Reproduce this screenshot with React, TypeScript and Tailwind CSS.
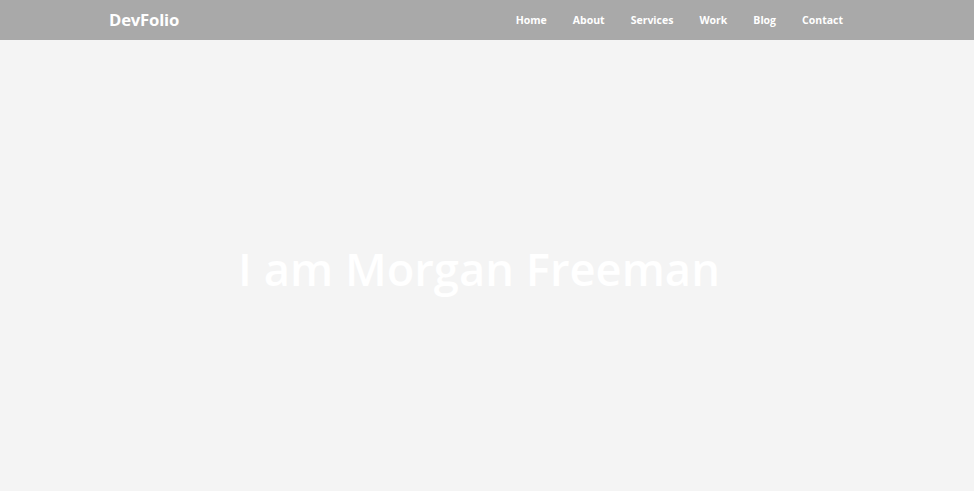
export default function App() {
  const links = ["Home", "About", "Services", "Work", "Blog", "Contact"]
  return (
    <div className="min-h-screen flex flex-col bg-[#f4f4f4]" style={{ fontFamily: '"Open Sans", "Noto Sans", sans-serif' }}>
      <header className="h-[40px] bg-[#a9a9a9] flex items-center justify-between pl-[109px] pr-[131px]">
        <div className="text-white text-[16.7px] font-bold tracking-[-0.2px]">DevFolio</div>
        <nav className="flex items-center gap-[26px] pt-[2px]">
          {links.map((l) => (
            <a key={l} href="#" className="text-white text-[10.5px] font-bold">{l}</a>
          ))}
        </nav>
      </header>
      <main className="h-[451px] flex items-center justify-center pr-[16px]">
        <h1 className="text-white text-[45.3px] font-semibold leading-none pt-[6px]">I am Morgan Freeman</h1>
      </main>
    </div>
  )
}
